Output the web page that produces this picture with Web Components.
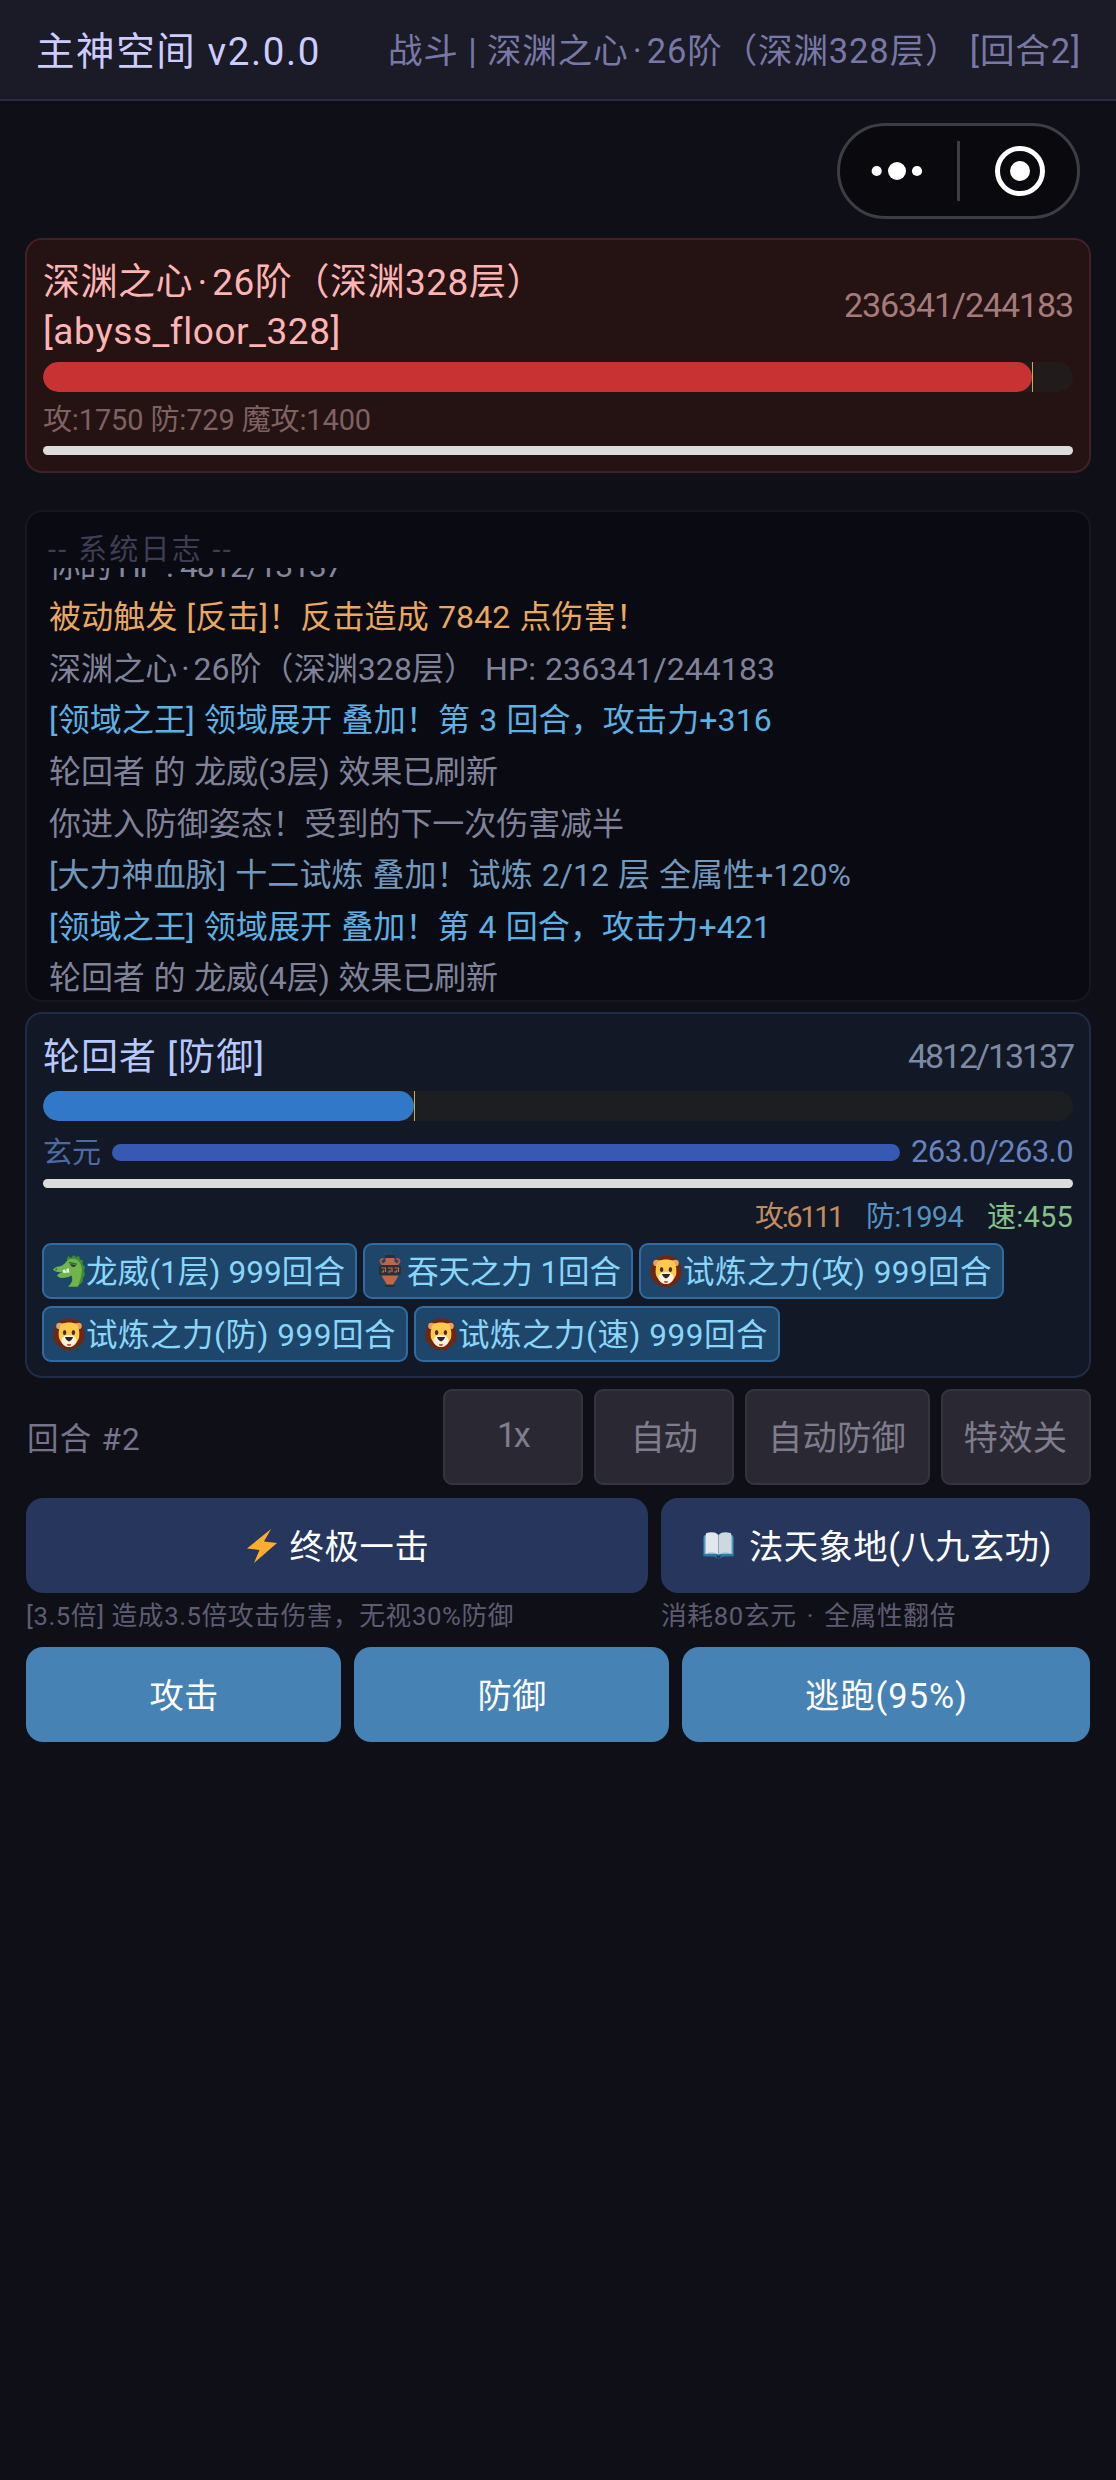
<!DOCTYPE html>
<html lang="zh-CN">
<head>
<meta charset="utf-8">
<title>主神空间</title>
<style>
html{background:#0f0f18}
body{margin:0;font-family:Roboto,"Noto Sans CJK SC",sans-serif;color:#fff;background:#0f0f18}
i{font-style:normal;padding:0 .12em}
</style>
</head>
<body>
<game-app>
  <app-header slot="header">
    <fit-text slot="title" w="285">主神空间 v2.0.0</fit-text>
    <fit-text slot="status" w="693">战斗 | 深渊之心<i>·</i>26阶（深渊328层） [回合2]</fit-text>
  </app-header>
  <capsule-menu slot="capsule"></capsule-menu>

  <unit-card side="enemy">
    <fit-text slot="name" w="501">深渊之心<i>·</i>26阶（深渊328层）</fit-text>
    <fit-text slot="name" w="297">[abyss_floor_328]</fit-text>
    <fit-text slot="hp" w="229">236341/244183</fit-text>
    <hp-bar value="96.02" color="#c83232" track="#211c1b"></hp-bar>
    <stat-line h="54" up="4" color="#7f6162" align="flex-start"><fit-text w="328">攻:1750 防:729 魔攻:1400</fit-text></stat-line>
    <turn-bar></turn-bar>
  </unit-card>

  <battle-log>
    <fit-text slot="title" w="185">-- 系统日志 --</fit-text>
    <log-line color="#85869e"><fit-text w="293">你的 HP : 4812/13137</fit-text></log-line>
    <log-line color="#e8a860"><fit-text w="599">被动触发 [反击]！反击造成 7842 点伤害！</fit-text></log-line>
    <log-line color="#80829a"><fit-text w="726">深渊之心<i>·</i>26阶（深渊328层） HP: 236341/244183</fit-text></log-line>
    <log-line color="#5cb2e4"><fit-text w="723">[领域之王] 领域展开 叠加！第 3 回合，攻击力+316</fit-text></log-line>
    <log-line color="#80829a"><fit-text w="449">轮回者 的 龙威(3层) 效果已刷新</fit-text></log-line>
    <log-line color="#80829a"><fit-text w="575">你进入防御姿态！受到的下一次伤害减半</fit-text></log-line>
    <log-line color="#7099bd"><fit-text w="802">[大力神血脉] 十二试炼 叠加！试炼 2/12 层 全属性+120%</fit-text></log-line>
    <log-line color="#5cb2e4"><fit-text w="722">[领域之王] 领域展开 叠加！第 4 回合，攻击力+421</fit-text></log-line>
    <log-line color="#80829a"><fit-text w="449">轮回者 的 龙威(4层) 效果已刷新</fit-text></log-line>
  </battle-log>

  <unit-card side="player">
    <fit-text slot="name" w="222">轮回者 [防御]</fit-text>
    <fit-text slot="hp" w="165">4812/13137</fit-text>
    <hp-bar value="36.02" color="#3278c8" track="#1d1e21"></hp-bar>
    <energy-row><fit-text slot="label" w="58">玄元</fit-text><fit-text slot="value" w="162">263.0/263.0</fit-text></energy-row>
    <turn-bar></turn-bar>
    <stat-line h="55" up="4" align="flex-end">
      <fit-text w="87" style="color:#c48c5c">攻:6111</fit-text>
      <fit-text w="97" style="color:#5492c2">防:1994</fit-text>
      <fit-text w="86" style="color:#84c088">速:455</fit-text>
    </stat-line>
    <buff-list>
      <buff-chip w="315" icon="dragon"><fit-text w="259">龙威(1层) 999回合</fit-text></buff-chip>
      <buff-chip w="270" icon="amphora"><fit-text w="214">吞天之力 1回合</fit-text></buff-chip>
      <buff-chip w="365" icon="lion"><fit-text w="309">试炼之力(攻) 999回合</fit-text></buff-chip>
      <buff-chip w="366" icon="lion"><fit-text w="310">试炼之力(防) 999回合</fit-text></buff-chip>
      <buff-chip w="366" icon="lion"><fit-text w="310">试炼之力(速) 999回合</fit-text></buff-chip>
    </buff-list>
  </unit-card>

  <round-row>
    <fit-text slot="label" w="114">回合 #2</fit-text>
    <toggle-button w="140"><fit-text w="31">1x</fit-text></toggle-button>
    <toggle-button w="140"><fit-text w="66">自动</fit-text></toggle-button>
    <toggle-button w="185"><fit-text w="138">自动防御</fit-text></toggle-button>
    <toggle-button w="150"><fit-text w="104">特效关</fit-text></toggle-button>
  </round-row>

  <skill-row>
    <skill-card w="622">
      <emoji-icon slot="icon" name="bolt"></emoji-icon><fit-text w="140">终极一击</fit-text>
      <fit-text slot="note" w="488">[3.5倍] 造成3.5倍攻击伤害，无视30%防御</fit-text>
    </skill-card>
    <skill-card w="429">
      <emoji-icon slot="icon" name="book"></emoji-icon><fit-text w="303">法天象地(八九玄功)</fit-text>
      <fit-text slot="note" w="295">消耗80玄元 <i>·</i> 全属性翻倍</fit-text>
    </skill-card>
  </skill-row>

  <action-row>
    <action-button w="315"><fit-text w="69">攻击</fit-text></action-button>
    <action-button w="315"><fit-text w="69">防御</fit-text></action-button>
    <action-button w="408"><fit-text w="163">逃跑(95%)</fit-text></action-button>
  </action-row>
</game-app>

<script>
const ICONS = {
  dragon: `<svg viewBox="0 0 32 32"><path fill="#3d8b33" d="M14 4l1-3 3 2 2.500-3L23 2l3-1 1 3.500 3 1-.500 3.500L32 12l-1 4 1 4-2 3-.5 4-3.500 3-5 1z"/><path fill="#70b44c" d="M0 14.500C2 12 4 12 6 11.500c3-.5 5-2 7-4.500 2.500-3 6.500-4 10-2.500 5 2.500 6.500 8 5.500 14-1 5-2 9.500-3.500 13.300H15c4-3.800 5.500-7.800 3.500-11.500-2 2.200-6 2.500-10 2.600-2 0-3.500-.9-4.500-2.600 2-2.200 4-2.800 6-3.300-3.500.4-7.500.5-10-2.500z"/><path fill="#fff" d="M9.500 15l2.300-.6 1.700 3.400h-3.200zM13.500 13.800l2.300-.4.700 4h-3z"/><path fill="#30373a" d="M17 9l6 1c-.5 2.500-4.500 2.800-5.500-.3z"/><path d="M16 7.500l8 1.700" stroke="#2f722d" stroke-width="1.500"/><circle cx="3.200" cy="14.200" r="1" fill="#2f722d"/></svg>`,
  amphora: `<svg viewBox="0 0 32 32"><path fill="#263238" d="M11 0h10v3H11zM12 18h8v11h-8zM11 29.500h10V32H11z"/><path d="M10 10C5.500 8 5.500 3.500 9.500 4M22 10c4.500-2 4.500-6.500.500-6" stroke="#b9573c" stroke-width="2" fill="none"/><path fill="#c1644a" d="M11.500 3h9v3.500l5 4H6.500l5-4zM7.500 20h17c-1 4-4 6-5 9.500h-7c-1-3.500-4-5.500-5-9.500z"/><rect x="5" y="10" width="22" height="10.500" rx="2.500" fill="#263238"/><path d="M7.500 13h4v4M14 13h4v4M20.500 13h4v4M9.500 15v2h-2M16 15v2h-2.500M22.500 15v2h-2.500" stroke="#c8674b" fill="none" stroke-width="1.200"/></svg>`,
  lion: `<svg viewBox="0 0 32 32"><path fill="#6d2815" d="M9 2l3-1 4-.800L20 1l4 1 3.500 3L30 9l1.200 5L32 19l-2 5-2.500 3-3.500 2.500L20 32h-8l-4-2.500L4.500 27 2 24 0 19l.8-5L2 9l2.500-4z"/><circle cx="6.500" cy="8" r="3.300" fill="#e5a264"/><circle cx="25.500" cy="8" r="3.300" fill="#e5a264"/><path fill="#ffca4b" d="M8 6c5-2 11-2 16 0 2 4 3 9 2 14-2 5-5 8-10 8S8 25 6 20C5 15 6 10 8 6z"/><path fill="#fff1dc" d="M16 17c-5 0-8 3-7.500 6 1 4 4 6 7.500 6s6.500-2 7.500-6c.5-3-2.500-6-7.500-6z"/><ellipse cx="11.600" cy="14.500" rx="1.700" ry="2.600" fill="#4b2b20"/><ellipse cx="20.400" cy="14.500" rx="1.700" ry="2.600" fill="#4b2b20"/><path fill="#2d2424" d="M12 19h8c-.5 2.500-2 3.500-4 4.500-2-1-3.500-2-4-4.500z"/><path fill="#e34a45" d="M14 26h4c0 3-4 3-4 0z"/></svg>`,
  bolt: `<svg viewBox="0 0 30 34"><path fill="#ffac2f" d="M24 0L0 19.500 12.500 21 7 34l23-20-13-1.500z"/></svg>`,
  book: `<svg viewBox="0 0 34 30"><path fill="#2f77a0" d="M0 5h34v22l-13 .5c-1 2.500-7 2.500-8 0L0 27z"/><path fill="#86bdd3" d="M1.500 3.500h31v21h-31z"/><path fill="#e1e8ed" d="M3 1.500C8-.500 14-.500 16.500 3v22C13 22 7 22.500 3 24z"/><path fill="#cdd8df" d="M31 1.500C26-.500 20-.500 17.500 3v22c3.500-3 9.500-2.500 13.500-1z"/><path d="M17 3v23" stroke="#8fa7b4"/><path fill="#12465f" d="M14 26h6l-1.500 3h-3z"/></svg>`
};

class Base extends HTMLElement {
  constructor() {
    super();
    this.attachShadow({mode: 'open'}).innerHTML = this.view();
  }
  a(name) { return this.getAttribute(name) || ''; }
}
const define = (tag, view) => customElements.define(tag, class extends Base {
  view() { return view(this); }
});

define('game-app', () => `<style>
  :host{display:flex;flex-direction:column;height:2480px;box-sizing:border-box}
  .cap{height:137px;display:flex;justify-content:flex-end;padding:22px 36px 0 0;box-sizing:border-box}
  main{display:flex;flex-direction:column;padding:0 25px}
</style><slot name="header"></slot><div class="cap"><slot name="capsule"></slot></div><main><slot></slot></main>`);

define('app-header', () => `<style>
  :host{display:flex;justify-content:space-between;align-items:center;height:101px;box-sizing:border-box;
    padding:0 35px 4px 36px;background:#1b1a27;border-bottom:2px solid #2b2a40}
  .t{font-size:38.500px;color:#ccccff}.s{font-size:34.500px;color:#7878a6}
</style><div class="t"><slot name="title"></slot></div><div class="s"><slot name="status"></slot></div>`);

define('capsule-menu', () => `<style>
  :host{display:flex;width:243px;height:96px;box-sizing:border-box;border:3px solid #3e3d43;border-radius:48px;background:#09090e}
  svg{display:block;margin:-3px}
</style><svg width="243" height="96"><g fill="#fff"><circle cx="39.700" cy="48" r="5.100"/><circle cx="60" cy="48" r="9"/><circle cx="80" cy="48" r="5.100"/><circle cx="183" cy="48" r="10"/></g>
<rect x="120" y="18" width="3" height="60" fill="#3e3d43"/><circle cx="183" cy="48" r="22.500" fill="none" stroke="#fff" stroke-width="5"/></svg>`);

define('unit-card', el => {
  const enemy = el.a('side') === 'enemy';
  return `<style>
  :host{display:block;box-sizing:border-box;border:2px solid ${enemy ? '#432024' : '#202b46'};border-radius:17px;
    background:${enemy ? '#251213' : '#121825'};padding:16px 16px 0;height:${enemy ? 235 : 366}px;margin-bottom:${enemy ? 37 : 11}px}
  .head{display:flex;justify-content:space-between;align-items:center;height:${enemy ? 100 : 55}px;margin-bottom:6px}
  .n{display:flex;flex-direction:column;align-items:flex-start;font-size:37px;line-height:${enemy ? 49.5 : 50}px;color:${enemy ? '#ffb4b4' : '#b6c8ff'};padding-top:${enemy ? 2 : 0}px}
  .h{font-size:34px;color:${enemy ? '#a67a7a' : '#7d8aa4'};padding-bottom:${enemy ? 2 : 4}px}
</style><div class="head"><div class="n"><slot name="name"></slot></div><div class="h"><slot name="hp"></slot></div></div><slot></slot>`;
});

define('hp-bar', el => `<style>
  :host{display:flex;height:30px;border-radius:15px;overflow:hidden;background:${el.a('track')}}
  .f{width:${el.a('value')}%;border-radius:15px;background:${el.a('color')}}
  .m{width:1px;background:#c0b050}
</style><div class="f"></div><div class="m"></div>`);

define('turn-bar', () => `<style>:host{display:block;height:9px;border-radius:4.500px;background:#dcdcdc}</style>`);

define('stat-line', el => `<style>
  :host{display:flex;gap:24px;align-items:center;height:${el.a('h')}px;box-sizing:border-box;padding-bottom:${el.a('up')}px;
    justify-content:${el.a('align')};font-size:29px;color:${el.a('color')}}
</style><slot></slot>`);

define('energy-row', () => `<style>
  :host{display:flex;align-items:center;height:58px;padding-top:2px;box-sizing:border-box;font-size:29px;line-height:40px}
  .l{color:#4e69a6;padding-top:3px}.v{color:#6782c0;font-size:31px;padding-top:2px}
  .b{flex:1;height:17px;border-radius:8.500px;background:#3859b3;margin:2px 11px 0}
</style><span class="l"><slot name="label"></slot></span><div class="b"></div><span class="v"><slot name="value"></slot></span>`);

define('buff-list', () => `<style>:host{display:flex;flex-wrap:wrap;gap:7px 6px;margin:0 -1px}</style><slot></slot>`);

define('buff-chip', el => `<style>
  :host{display:flex;align-items:center;box-sizing:border-box;width:${el.a('w')}px;height:56px;border:2px solid #326ba2;border-radius:9px;
    background:#1e466a;color:#8ad6fa;font-size:31.500px;padding:0 0 0 9px;gap:1px}
  .x{padding-bottom:4px}
</style><emoji-icon name="${el.a('icon')}"></emoji-icon><div class="x"><slot></slot></div>`);

define('emoji-icon', el => `<style>
  :host{display:block;flex:none}svg{display:block;width:32px;height:32px}
  :host([name=bolt]) svg{width:30px;height:34px}:host([name=book]) svg{width:35px;height:27px}
</style>${ICONS[el.a('name')]}`);

define('battle-log', () => `<style>
  :host{display:block;box-sizing:border-box;height:492px;margin-bottom:10px;border:2px solid #171721;border-radius:17px;background:#0a0a12;padding:18px 21px 0}
  .t{height:38px;line-height:41px;font-size:29px;color:#3f3d53}
  .v{display:flex;flex-direction:column;justify-content:flex-end;height:437px;margin-bottom:-3px;overflow:hidden}
</style><div class="t"><slot name="title"></slot></div><div class="v"><slot></slot></div>`);

define('log-line', el => `<style>
  :host{display:block;flex:none;height:51.600px;line-height:51.600px;font-size:32px;color:${el.a('color')};padding-left:1px;word-spacing:.03em}
</style><slot></slot>`);

define('round-row', () => `<style>
  :host{display:flex;height:96px;align-items:center;gap:11px;margin-bottom:13px}
  .l{font-size:31.500px;color:#76738a;margin-right:auto;padding:0 0 3px 2px}
</style><span class="l"><slot name="label"></slot></span><slot></slot>`);

define('toggle-button', el => `<style>
  :host{display:flex;align-items:center;justify-content:center;box-sizing:border-box;width:${el.a('w')}px;height:96px;border:2px solid #35343d;
    border-radius:9px;background:#2a2933;color:#7f7c8c;font-size:34.300px;padding:0 1px 4px 0}
</style><slot></slot>`);

define('skill-row', () => `<style>:host{display:flex;gap:13px;padding-left:1px;height:149px}</style><slot></slot>`);

define('skill-card', el => `<style>
  :host{display:block;width:${el.a('w')}px;flex:none}
  .b{display:flex;align-items:center;justify-content:center;gap:13px;box-sizing:border-box;height:95px;padding-left:2px;border-radius:17px;background:#26365d;color:#fff;font-size:34.300px}
  .x{padding-bottom:4px}
  .n{font-size:25.700px;line-height:40px;padding-top:3px;color:#5e5c72}
</style><div class="b"><slot name="icon"></slot><div class="x"><slot></slot></div></div><div class="n"><slot name="note"></slot></div>`);

define('action-row', () => `<style>:host{display:flex;gap:13px;padding-left:1px}</style><slot></slot>`);

define('action-button', el => `<style>
  :host{display:flex;align-items:center;justify-content:center;box-sizing:border-box;width:${el.a('w')}px;height:95px;border-radius:17px;
    background:#4682b4;color:#fff;font-size:34.300px;padding:0 0 4px 1px}
</style><slot></slot>`);

/* Spreads its text over the measure given in "w" by letter spacing. */
customElements.define('fit-text', class extends Base {
  view() { return `<style>:host{display:inline-block;white-space:nowrap;flex:none}</style><slot></slot>`; }
  connectedCallback() {
    const natural = this.getBoundingClientRect().width;
    this.style.letterSpacing = (this.a('w') - natural) / this.textContent.length + 'px';
  }
});
</script>
</body>
</html>
